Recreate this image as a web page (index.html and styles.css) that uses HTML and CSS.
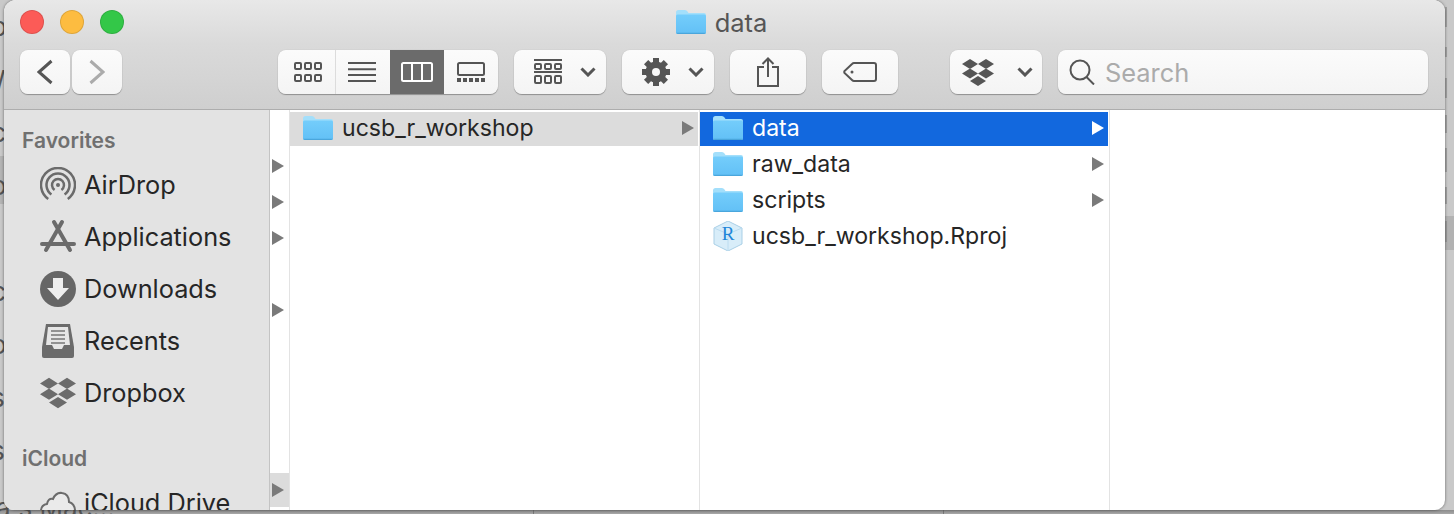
FILE: index.html
```html
<html>
<head>
    <title>data</title>
    <link rel="stylesheet" href="styles.css">
</head>
<body>
    <svg class="defs" width="0" height="0">
        <defs>
            <linearGradient id="folderBody" x1="0" y1="0" x2="0" y2="1">
                <stop offset="0" stop-color="#74cdfb"/>
                <stop offset="1" stop-color="#62c0f6"/>
            </linearGradient>
            <symbol id="folder" viewBox="0 0 30 24">
                <path d="M0 2.5Q0 0 2.5 0H9Q10.500 0 11.500 1.500L12.500 3H28Q30 3 30 5V22Q30 24 28 24H2Q0 24 0 22Z" fill="#a3dffb"/>
                <path d="M0 6Q0 4.500 1.500 4.500H28.500Q30 4.500 30 6V22Q30 24 28 24H2Q0 24 0 22Z" fill="url(#folderBody)"/>
                <path d="M0 22.700H30V22Q30 24 28 24H2Q0 24 0 22Z" fill="#4aa6dc"/>
            </symbol>
            <symbol id="dropbox" viewBox="0 0 32 27">
                <path d="M8 0L16 5L8 10L0 5ZM24 0L32 5L24 10L16 5ZM8 9.500L16 14.500L8 19.500L0 14.500ZM24 9.500L32 14.500L24 19.500L16 14.500ZM16 17L24 22L16 27L8 22Z"/>
            </symbol>
            <symbol id="chevron" viewBox="0 0 16 10">
                <path d="M1.500 1.500L8 8L14.500 1.500" fill="none" stroke="#555" stroke-width="3"/>
            </symbol>
        </defs>
    </svg>

    <div class="peek">
        <div>p</div>
        <div>W</div>
        <div>c</div>
        <div>o</div>
        <div>&nbsp;</div>
        <div>c</div>
        <div>o</div>
        <div>s</div>
        <div>s</div>
    </div>
    <div class="peek-bottom">a's Mac...</div>

    <div class="window">
        <div class="titlebar">
            <div class="lights">
                <span class="light red"></span>
                <span class="light yellow"></span>
                <span class="light green"></span>
            </div>
            <div class="title">
                <svg class="folder-icon"><use href="#folder"/></svg>
                <span>data</span>
            </div>
        </div>

        <div class="toolbar">
            <div class="nav">
                <button class="btn nav-btn">
                    <svg width="16" height="26" viewBox="0 0 16 26"><path d="M14.500 2L2 13L14.500 24" fill="none" stroke="#555" stroke-width="3"/></svg>
                </button>
                <button class="btn nav-btn">
                    <svg width="16" height="26" viewBox="0 0 16 26"><path d="M1.500 2L14 13L1.500 24" fill="none" stroke="#ababab" stroke-width="3"/></svg>
                </button>
            </div>

            <div class="btn views">
                <div class="view view-icons">
                    <svg width="28" height="20" viewBox="0 0 28 20" fill="none" stroke="#555" stroke-width="2">
                        <rect x="1" y="1" width="6" height="6" rx="1"/><rect x="11" y="1" width="6" height="6" rx="1"/><rect x="21" y="1" width="6" height="6" rx="1"/>
                        <rect x="1" y="13" width="6" height="6" rx="1"/><rect x="11" y="13" width="6" height="6" rx="1"/><rect x="21" y="13" width="6" height="6" rx="1"/>
                    </svg>
                </div>
                <div class="view view-list">
                    <svg width="28" height="20" viewBox="0 0 28 20" stroke="#555" stroke-width="2">
                        <path d="M0 1H28M0 7.300H28M0 13H28M0 19H28"/>
                    </svg>
                </div>
                <div class="view view-active">
                    <svg width="32" height="20" viewBox="0 0 32 20" fill="none" stroke="#fff" stroke-width="2">
                        <rect x="1" y="1" width="30" height="18" rx="1.500"/><path d="M11 1V19M21 1V19"/>
                    </svg>
                </div>
                <div class="view">
                    <svg width="28" height="20" viewBox="0 0 28 20" fill="none" stroke="#555" stroke-width="2">
                        <rect x="1" y="1" width="26" height="12" rx="1.500"/>
                        <path d="M0 18H4M6 18H10M12 18H16M18 18H22M24 18H28" stroke-width="4"/>
                    </svg>
                </div>
            </div>

            <button class="btn menu-btn">
                <svg class="menu-icon" width="28" height="26" viewBox="0 0 28 26" fill="none" stroke="#555" stroke-width="2">
                    <path d="M0 1H28M0 13H28"/>
                    <rect x="1" y="5" width="6" height="5" rx="1"/><rect x="11" y="5" width="6" height="5" rx="1"/><rect x="21" y="5" width="6" height="5" rx="1"/>
                    <rect x="1" y="17" width="6" height="7" rx="1"/><rect x="11" y="17" width="6" height="7" rx="1"/><rect x="21" y="17" width="6" height="7" rx="1"/>
                </svg>
                <svg class="chevron"><use href="#chevron"/></svg>
            </button>

            <button class="btn menu-btn">
                <svg class="menu-icon" width="28" height="28" viewBox="-14 -14 28 28" fill="#555">
                    <rect x="-3" y="-14" width="6" height="28"/>
                    <rect x="-3" y="-14" width="6" height="28" transform="rotate(45)"/>
                    <rect x="-3" y="-14" width="6" height="28" transform="rotate(90)"/>
                    <rect x="-3" y="-14" width="6" height="28" transform="rotate(135)"/>
                    <circle r="10.500"/>
                    <circle r="4" fill="#f8f8f8"/>
                </svg>
                <svg class="chevron"><use href="#chevron"/></svg>
            </button>

            <button class="btn plain-btn">
                <svg width="22" height="30" viewBox="0 0 22 30" fill="none" stroke="#555" stroke-width="2">
                    <path d="M7 10H1V29H21V10H15M11 20V2M5.500 7L11 1.500L16.500 7"/>
                </svg>
            </button>

            <button class="btn plain-btn">
                <svg width="34" height="20" viewBox="0 0 34 20" fill="none" stroke="#555" stroke-width="2">
                    <path d="M11 1H31Q33 1 33 3V17Q33 19 31 19H11Q10 19 9 18L1.500 11Q1 10 1.500 9L9 2Q10 1 11 1Z"/>
                    <circle cx="9" cy="10" r="1.500" fill="#555" stroke="none"/>
                </svg>
            </button>

            <button class="btn menu-btn dropbox-btn">
                <svg class="dropbox-icon"><use href="#dropbox"/></svg>
                <svg class="chevron"><use href="#chevron"/></svg>
            </button>

            <div class="btn search">
                <svg width="26" height="26" viewBox="0 0 26 26" fill="none" stroke="#555" stroke-width="2">
                    <circle cx="11" cy="11" r="9.500"/><path d="M17.500 18L25 25.500"/>
                </svg>
                <span>Search</span>
            </div>
        </div>

        <div class="main">
            <div class="sidebar">
                <div class="heading">Favorites</div>
                <div class="item">
                    <svg class="side-icon" viewBox="0 0 36 36" fill="none" stroke="#6b6b6b" stroke-width="2.500">
                        <path d="M8.240 31.900A17 17 0 1 1 27.760 31.900"/>
                        <path d="M11.400 27.400A11.500 11.500 0 1 1 24.600 27.400"/>
                        <path d="M14.560 22.900A6 6 0 1 1 21.440 22.900"/>
                        <circle cx="18" cy="18" r="2" fill="#6b6b6b" stroke="none"/>
                    </svg>
                    <span>AirDrop</span>
                </div>
                <div class="item">
                    <svg class="side-icon" viewBox="0 0 36 36" fill="none" stroke="#6b6b6b" stroke-width="4" stroke-linecap="round">
                        <path d="M22 3L6 31M14 3L30 31M2 25H34"/>
                    </svg>
                    <span>Applications</span>
                </div>
                <div class="item">
                    <svg class="side-icon" viewBox="0 0 36 36">
                        <circle cx="18" cy="18" r="18" fill="#666"/>
                        <path d="M13 7H23V17H29L18 29L7 17H13Z" fill="#eee"/>
                    </svg>
                    <span>Downloads</span>
                </div>
                <div class="item">
                    <svg class="side-icon" viewBox="0 0 36 36">
                        <path d="M6 1H30L34 24V33Q34 35 32 35H4Q2 35 2 33V24Z" fill="#6b6b6b"/>
                        <path d="M8 4H28L30 22H24L22 26H14L12 22H6Z" fill="#e6e6e6"/>
                        <path d="M11 8H25M11 12H25M11 16H25M11 20H25" stroke="#777" stroke-width="1.500"/>
                    </svg>
                    <span>Recents</span>
                </div>
                <div class="item">
                    <svg class="side-icon dropbox-side"><use href="#dropbox"/></svg>
                    <span>Dropbox</span>
                </div>
                <div class="heading heading-next">iCloud</div>
                <div class="item">
                    <svg class="side-icon" viewBox="0 0 36 36" fill="#eaeaea" stroke="#6b6b6b" stroke-width="2">
                        <path d="M8 33Q1 33 1 26Q1 20 7 19Q8 13 13 14Q16 7 22 8Q29 9 29 17Q35 19 35 26Q35 33 28 33Z"/>
                    </svg>
                    <span>iCloud Drive</span>
                </div>
            </div>

            <div class="col col-narrow">
                <div class="mini"></div>
                <div class="mini"><i class="arrow"></i></div>
                <div class="mini"><i class="arrow"></i></div>
                <div class="mini"><i class="arrow"></i></div>
                <div class="mini"></div>
                <div class="mini"><i class="arrow"></i></div>
                <div class="mini"></div>
                <div class="mini"></div>
                <div class="mini"></div>
                <div class="mini"></div>
                <div class="mini mini-open"><i class="arrow"></i></div>
            </div>

            <div class="col">
                <div class="row row-open">
                    <svg class="folder-icon"><use href="#folder"/></svg>
                    <span>ucsb_r_workshop</span>
                    <i class="arrow"></i>
                </div>
            </div>

            <div class="col">
                <div class="row row-selected">
                    <svg class="folder-icon"><use href="#folder"/></svg>
                    <span>data</span>
                    <i class="arrow"></i>
                </div>
                <div class="row">
                    <svg class="folder-icon"><use href="#folder"/></svg>
                    <span>raw_data</span>
                    <i class="arrow"></i>
                </div>
                <div class="row">
                    <svg class="folder-icon"><use href="#folder"/></svg>
                    <span>scripts</span>
                    <i class="arrow"></i>
                </div>
                <div class="row">
                    <svg class="folder-icon rproj-icon" viewBox="0 0 30 30">
                        <path d="M15 0L29 7V23L15 30L1 23V7Z" fill="#d8edf9" stroke="#a9cfe6"/>
                        <path d="M1 7L15 13L29 7M15 13V30" fill="none" stroke="#bcdcf0"/>
                        <text x="15" y="19" class="r-letter">R</text>
                    </svg>
                    <span>ucsb_r_workshop.Rproj</span>
                </div>
            </div>

            <div class="col-empty"></div>
        </div>
    </div>
</body>
</html>
```

FILE: styles.css
```css
html, body {
    margin: 0;
    height: 514px;
    overflow: hidden;
}
body {
    position: relative;
    font-family: Inter, "Noto Sans", sans-serif;
    color: #262626;
    background:
        linear-gradient(#a2a2a2, #a2a2a2) 1445px 7px / 2px 20px no-repeat,
        linear-gradient(#a2a2a2, #a2a2a2) 1445px 47px / 2px 10px no-repeat,
        linear-gradient(#a2a2a2, #a2a2a2) 1445px 78px / 2px 20px no-repeat,
        linear-gradient(#a2a2a2, #a2a2a2) 1445px 115px / 2px 18px no-repeat,
        linear-gradient(#a2a2a2, #a2a2a2) 1445px 148px / 2px 24px no-repeat,
        linear-gradient(#a2a2a2, #a2a2a2) 1445px 187px / 2px 17px no-repeat,
        linear-gradient(#999, #999) 1445px 221px / 2px 21px no-repeat,
        linear-gradient(#777, #777) 533px 510px / 1px 4px no-repeat,
        linear-gradient(#777, #777) 943px 510px / 1px 4px no-repeat,
        linear-gradient(#b2b2b2, #b2b2b2) 1445px 216px / 9px 34px no-repeat,
        linear-gradient(#b4b4b4, #b4b4b4) 0 156px / 4px 48px no-repeat,
        linear-gradient(#8c8c8c, #a8a8a8) 0 510px / 100% 4px no-repeat,
        #c9c9c9;
}
.defs {
    position: absolute;
}

/* bits of whatever is behind the window */
.peek {
    position: absolute;
    left: -9px;
    top: 0;
    font-size: 26px;
    line-height: 53px;
    color: #555;
}
.peek-bottom {
    position: absolute;
    left: -4px;
    top: 492px;
    font-size: 26px;
    color: #555;
}

.window {
    position: relative;
    display: flex;
    flex-direction: column;
    width: 1441px;
    height: 510px;
    margin-left: 4px;
    border-radius: 12px 12px 10px 10px;
    overflow: hidden;
    background: #fff;
    box-shadow: 0 0 3px rgba(0, 0, 0, 0.5);
}

.titlebar {
    display: grid;
    grid-template-columns: 1fr auto 1fr;
    align-items: center;
    height: 44px;
    padding-right: 6px;
    flex: none;
}
.lights {
    display: flex;
    gap: 16px;
    padding-left: 16px;
}
.light {
    width: 22px;
    height: 22px;
    border-radius: 50%;
    border: 1px solid rgba(0, 0, 0, 0.12);
}
.red { background: #fc5b57; }
.yellow { background: #fdbc40; }
.green { background: #33c748; }
.title {
    display: flex;
    align-items: center;
    gap: 9px;
    font-size: 25.5px;
    color: #555;
}

.titlebar, .toolbar {
    background: linear-gradient(#e8e8e8, #dadada);
}
.toolbar {
    display: flex;
    align-items: flex-start;
    height: 59px;
    padding: 6px 0 0 16px;
    border-bottom: 1px solid #adadad;
    background: linear-gradient(#dadada, #cfcfcf);
    flex: none;
}
.btn {
    display: flex;
    align-items: center;
    justify-content: center;
    height: 44px;
    padding: 0;
    border: none;
    border-radius: 8px;
    background: linear-gradient(#fbfbfb, #f4f4f4);
    box-shadow: 0 1px 1px rgba(0, 0, 0, 0.3), 0 0 1px rgba(0, 0, 0, 0.2);
    flex: none;
}
.nav {
    display: flex;
    gap: 2px;
    margin-right: 156px;
}
.nav-btn {
    width: 50px;
}
.views {
    width: 220px;
    margin-right: 16px;
    overflow: hidden;
}
.view {
    display: flex;
    align-items: center;
    justify-content: center;
    width: 54px;
    height: 44px;
}
.view-icons {
    width: 57px;
    padding-left: 2px;
    box-sizing: border-box;
    border-right: 1px solid #dcdcdc;
}
.view-list {
    width: 54px;
    padding-right: 2px;
    box-sizing: border-box;
}
.view-active {
    background: #6b6b6b;
}
.menu-btn {
    justify-content: flex-start;
    width: 92px;
    margin-right: 16px;
}
.menu-icon {
    margin-left: 20px;
}
.chevron {
    width: 16px;
    height: 10px;
    margin-left: 18px;
}
.plain-btn {
    width: 76px;
    margin-right: 16px;
}
.dropbox-btn {
    margin-left: 36px;
}
.dropbox-icon {
    width: 32px;
    height: 27px;
    margin-left: 12px;
    fill: #555;
}
.dropbox-btn .chevron {
    margin-left: 23px;
}
.search {
    justify-content: flex-start;
    gap: 10px;
    width: 370px;
    padding-left: 11px;
    box-sizing: border-box;
    font-size: 25.4px;
    color: #ababab;
}

.main {
    display: flex;
    flex: 1;
    min-height: 0;
}
.sidebar {
    width: 265px;
    border-right: 1px solid #c4c4c4;
    background: #e3e3e3;
    overflow: hidden;
    flex: none;
}
.heading {
    padding: 16px 0 0 18px;
    margin-bottom: 3px;
    font-size: 21px;
    font-weight: 600;
    line-height: 30px;
    color: #707070;
}
.heading-next {
    padding-top: 0;
    margin-top: 25px;
}
.item {
    display: flex;
    align-items: center;
    gap: 8px;
    height: 52px;
    padding-left: 36px;
    font-size: 25.3px;
}
.item span {
    margin-top: -2px;
}
.side-icon {
    width: 36px;
    height: 36px;
    flex: none;
}
.dropbox-side {
    fill: #6b6b6b;
}

.col {
    width: 409px;
    padding-top: 2px;
    border-right: 1px solid #e3e3e3;
    flex: none;
}
.col-narrow {
    width: 19px;
    padding-top: 3px;
}
.mini {
    display: flex;
    align-items: center;
    height: 34px;
    padding-left: 2px;
    margin-bottom: 2px;
}
.mini-open {
    background: #dcdcdc;
}
.row {
    display: flex;
    align-items: center;
    gap: 9px;
    height: 34px;
    box-sizing: border-box;
    margin: 0 1px 2px 0;
    padding: 0 0 2px 13px;
    font-size: 23.1px;
}
.row-open {
    background: #dcdcdc;
}
.row-selected {
    background: #1268de;
    color: #fff;
}
.folder-icon {
    width: 30px;
    height: 24px;
    flex: none;
}
.rproj-icon {
    height: 30px;
}
.r-letter {
    font-family: "Liberation Serif", serif;
    font-size: 19px;
    text-anchor: middle;
    fill: #2186d8;
}
.arrow {
    width: 12px;
    height: 14px;
    margin-left: auto;
    margin-right: 4px;
    background: #7a7a7a;
    clip-path: polygon(0 0, 100% 50%, 0 100%);
}
.mini .arrow {
    margin: 0;
}
.row-selected .arrow {
    background: #fff;
}
.col-empty {
    flex: 1;
}
```
